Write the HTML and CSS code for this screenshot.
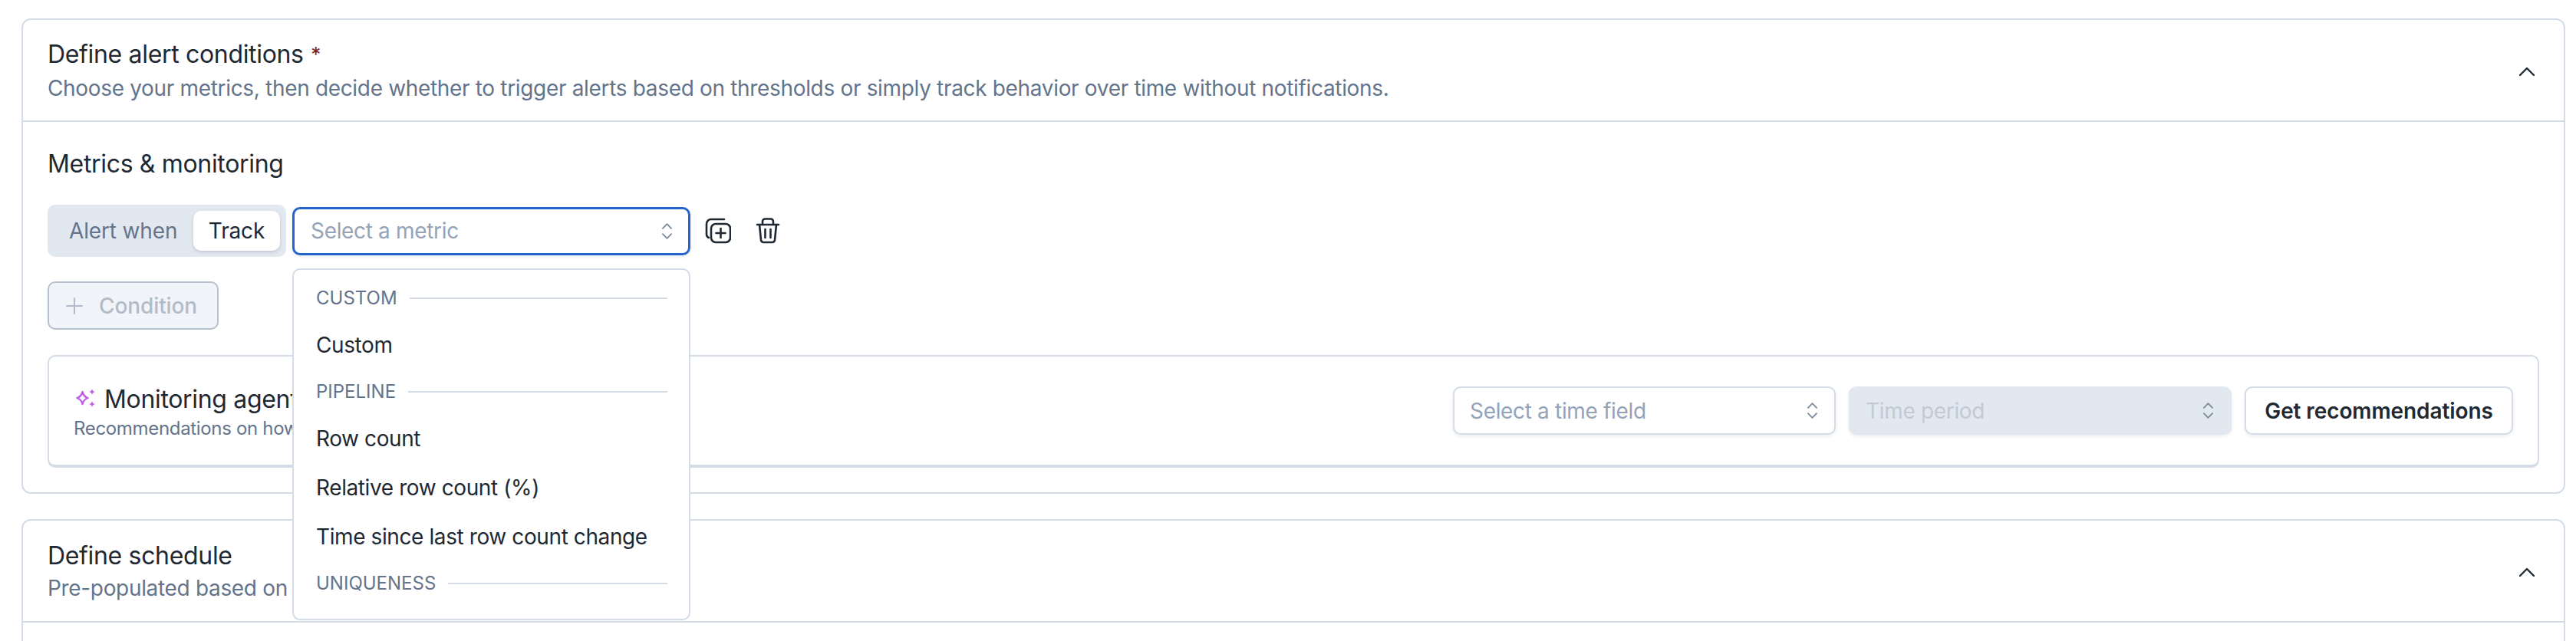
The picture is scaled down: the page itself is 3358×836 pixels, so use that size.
FILE: index.html
```html
<!DOCTYPE html>
<html lang="en">
<head>
    <meta charset="UTF-8">
    <meta name="viewport" content="width=device-width, initial-scale=1.0">
    <title>Define alert conditions</title>
    <link rel="stylesheet" href="styles.css">
</head>
<body>
    <section class="card">
        <header class="card-header">
            <div>
                <h2 class="card-title">Define alert conditions <span class="required">*</span></h2>
                <p class="card-subtitle">Choose your metrics, then decide whether to trigger alerts based on thresholds or simply track behavior over time without notifications.</p>
            </div>
            <svg class="collapse-icon" viewBox="0 0 20 12"><path d="M1 11 10 2l9 9"/></svg>
        </header>
        <div class="card-body">
            <h3 class="section-title">Metrics &amp; monitoring</h3>
            <div class="metric-row">
                <div class="toggle">
                    <span class="toggle-option">Alert when</span>
                    <span class="toggle-option toggle-active">Track</span>
                </div>
                <div class="metric-select">
                    <div class="select select-focus">
                        <span class="placeholder">Select a metric</span>
                        <svg class="updown" viewBox="0 0 14 22"><path d="M1 7 7 1l6 6M1 15l6 6 6-6"/></svg>
                    </div>
                    <div class="menu">
                        <div class="menu-group"><span>CUSTOM</span></div>
                        <div class="menu-item">Custom</div>
                        <div class="menu-group"><span>PIPELINE</span></div>
                        <div class="menu-item">Row count</div>
                        <div class="menu-item">Relative row count (%)</div>
                        <div class="menu-item">Time since last row count change</div>
                        <div class="menu-group"><span>UNIQUENESS</span></div>
                    </div>
                </div>
                <svg class="row-icon copy-icon" viewBox="0 0 34 34">
                    <path d="M25 2H8a6 6 0 0 0-6 6v14a5 5 0 0 0 3 4"/>
                    <rect x="8" y="8" width="25" height="24" rx="6"/>
                    <path d="M20.500 14v12M14.500 20h12"/>
                </svg>
                <svg class="row-icon trash-icon" viewBox="0 0 32 34">
                    <path d="M2 9h28"/>
                    <path d="M9 9V5a3.500 3.500 0 0 1 3.500-3.500h7A3.500 3.500 0 0 1 23 5v4"/>
                    <path d="M5 9l2 20a3.500 3.500 0 0 0 3.500 3h11a3.500 3.500 0 0 0 3.500-3l2-20"/>
                    <path d="M12.500 15v11M19.500 15v11"/>
                </svg>
            </div>
            <button class="condition-button">
                <svg class="plus-icon" viewBox="0 0 22 22"><path d="M11 1v20M1 11h20"/></svg>
                Condition
            </button>
            <div class="agent-card">
                <div>
                    <div class="agent-title">
                        <svg class="sparkle" viewBox="0 0 25 24">
                            <path class="sparkle-line" d="M8.500 4c.8 4 3 6.500 7 8-4 1.500-6.200 4-7 8-.8-4-3-6.500-7-8 4-1.500 6.200-4 7-8z"/>
                            <path class="sparkle-fill" d="M21 0c.5 2.400 1.500 3.500 4 4-2.500.5-3.500 1.600-4 4-.5-2.400-1.500-3.500-4-4 2.500-.5 3.500-1.600 4-4zM21 16c.5 2.400 1.500 3.500 4 4-2.500.5-3.500 1.600-4 4-.5-2.400-1.500-3.500-4-4 2.500-.5 3.500-1.600 4-4z"/>
                        </svg>
                        <span class="agent-name">Monitoring agent</span>
                    </div>
                    <p class="agent-subtitle">Recommendations on how to monitor this data</p>
                </div>
                <div class="agent-controls">
                    <div class="select select-wide">
                        <span class="placeholder">Select a time field</span>
                        <svg class="updown" viewBox="0 0 14 22"><path d="M1 7 7 1l6 6M1 15l6 6 6-6"/></svg>
                    </div>
                    <div class="select select-wide select-disabled">
                        <span class="placeholder">Time period</span>
                        <svg class="updown" viewBox="0 0 14 22"><path d="M1 7 7 1l6 6M1 15l6 6 6-6"/></svg>
                    </div>
                    <button class="recommend-button">Get recommendations</button>
                </div>
            </div>
        </div>
    </section>
    <section class="card card-schedule">
        <header class="card-header">
            <div>
                <h2 class="card-title">Define schedule</h2>
                <p class="card-subtitle">Pre-populated based on data</p>
            </div>
            <svg class="collapse-icon" viewBox="0 0 20 12"><path d="M1 11 10 2l9 9"/></svg>
        </header>
    </section>
</body>
</html>
```

FILE: styles.css
```css
* {
    box-sizing: border-box;
}
html, body {
    height: 836px;
    overflow: hidden;
}
body {
    margin: 0;
    padding: 24px 14px 0 28px;
    background-color: #ffffff;
    color: #1f2933;
    font-family: Inter, "Noto Sans", sans-serif;
    font-size: 28px;
    letter-spacing: -0.33px;
}
svg {
    display: block;
    fill: none;
    stroke: currentColor;
    stroke-linecap: round;
    stroke-linejoin: round;
}
.card {
    border: 2px solid #d3dce7;
    border-radius: 12px;
    background-color: #ffffff;
}
.card-schedule {
    margin-top: 33px;
    height: 300px;
}
.card-header {
    display: flex;
    align-items: center;
    justify-content: space-between;
    height: 133px;
    padding: 2px 38px 0 32px;
    border-bottom: 2px solid #d3dce7;
}
.card-title {
    margin: 0;
    font-size: 32px;
    font-weight: 400;
    line-height: 40px;
}
.required {
    position: relative;
    top: -2px;
    margin-left: 1px;
    color: #7f1d1d;
    font-size: 26px;
}
.card-subtitle {
    margin: 2px 0 0;
    color: #64748b;
    font-size: 28px;
    line-height: 40px;
}
.collapse-icon {
    width: 20px;
    height: 12px;
    stroke-width: 2.4;
}
.card-body {
    padding: 35px 32px 32px;
}
.section-title {
    margin: 0 0 33px;
    font-size: 32px;
    font-weight: 400;
    line-height: 40px;
}
.metric-row {
    display: flex;
    align-items: center;
    height: 68px;
}
.toggle {
    display: flex;
    align-items: center;
    justify-content: space-between;
    width: 311px;
    height: 68px;
    padding: 0 8px 0 28px;
    background-color: #e2e8f0;
    border-radius: 10px;
    letter-spacing: -0.15px;
}
.toggle-option {
    color: #64748b;
    line-height: 52px;
}
.toggle-active {
    width: 113px;
    background-color: #ffffff;
    border-radius: 10px;
    box-shadow: 0 2px 4px rgba(15, 23, 42, 0.15);
    color: #1f2933;
    text-align: center;
}
.metric-select {
    position: relative;
    width: 519px;
    margin-left: 8px;
}
.select {
    display: flex;
    align-items: center;
    justify-content: space-between;
    height: 63px;
    padding: 0 22px;
    background-color: #ffffff;
    border: 2px solid #d3dce7;
    border-radius: 10px;
    box-shadow: 0 2px 4px rgba(15, 23, 42, 0.08);
}
.select-focus {
    padding: 0 21px;
    border: 3px solid #2563cf;
}
.select-wide {
    width: 499px;
}
.select-disabled {
    background-color: #e2e8f0;
    border-color: #e2e8f0;
}
.select-disabled .placeholder {
    color: #c2cad5;
}
.placeholder {
    color: #94a3b8;
}
.updown {
    width: 13px;
    height: 21px;
    color: #7b8a9c;
    stroke-width: 2;
}
.menu {
    position: absolute;
    top: 80px;
    left: 0;
    z-index: 2;
    width: 519px;
    height: 459px;
    padding: 9px 28px 0 29px;
    background-color: #ffffff;
    border: 2px solid #d3dce7;
    border-radius: 10px;
    overflow: hidden;
}
.menu-group {
    display: flex;
    align-items: center;
    gap: 16px;
    height: 50px;
    margin: 3px 0 5px;
    color: #64748b;
    font-size: 24px;
    letter-spacing: 0;
}
.menu-group::after {
    content: "";
    flex: 1;
    height: 2px;
    background-color: #d3dce7;
}
.menu-item {
    height: 64px;
    line-height: 62px;
    letter-spacing: -0.4px;
}
.row-icon {
    color: #1f2933;
    stroke-width: 2.6;
}
.copy-icon {
    width: 34px;
    height: 34px;
    margin-left: 19px;
}
.trash-icon {
    width: 32px;
    height: 34px;
    margin-left: 32px;
}
.condition-button {
    display: flex;
    align-items: center;
    gap: 21px;
    width: 223px;
    height: 63px;
    margin-top: 32px;
    padding: 0 0 0 22px;
    background-color: #f1f5f9;
    border: 2px solid #b5c1cf;
    border-radius: 10px;
    color: #b1bcc8;
    font-family: inherit;
    font-size: 28px;
    font-weight: 500;
    letter-spacing: -0.1px;
}
.plus-icon {
    width: 22px;
    height: 22px;
    stroke-width: 2;
}
.agent-card {
    display: flex;
    align-items: center;
    justify-content: space-between;
    height: 147px;
    margin-top: 33px;
    padding: 0 32px;
    border: 2px solid #d3dce7;
    border-bottom-width: 4px;
    border-radius: 10px;
}
.agent-title {
    display: flex;
    align-items: center;
    gap: 12px;
    margin-left: 3px;
    padding-top: 4px;
    font-size: 32px;
    line-height: 40px;
}
.sparkle {
    width: 25px;
    height: 24px;
    margin-top: -3px;
    color: #c05ce6;
}
.sparkle-line {
    stroke-width: 2.4;
}
.sparkle-fill {
    fill: #c05ce6;
    stroke: none;
}
.agent-subtitle {
    margin: 2px 0 0;
    color: #64748b;
    font-size: 24px;
    line-height: 32px;
}
.agent-controls {
    display: flex;
    align-items: center;
    gap: 17px;
}
.agent-controls .select {
    padding-left: 20px;
}
.recommend-button {
    width: 350px;
    height: 63px;
    padding: 0;
    background-color: #ffffff;
    border: 2px solid #d3dce7;
    border-radius: 10px;
    box-shadow: 0 2px 4px rgba(15, 23, 42, 0.08);
    color: #1f2933;
    font-family: inherit;
    font-size: 28px;
    font-weight: 600;
    letter-spacing: -0.1px;
}
```
